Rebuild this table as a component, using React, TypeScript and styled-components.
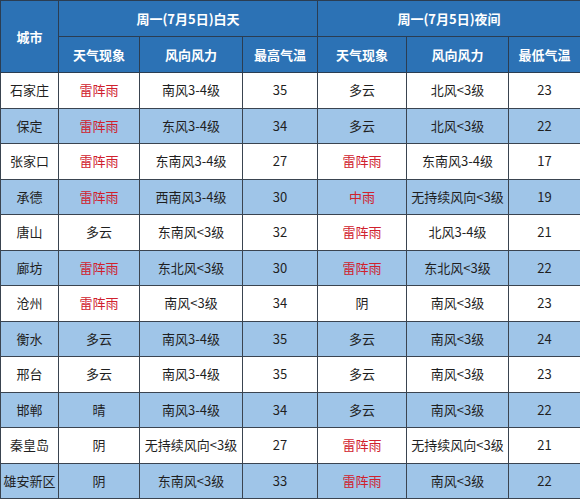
import React from "react";
import styled, { createGlobalStyle } from "styled-components";

const Global = createGlobalStyle`
  html, body { margin: 0; padding: 0; background: #ffffff; }
  body { font-family: "Noto Sans CJK SC", "Noto Sans", sans-serif; }
`;

const Table = styled.table`
  width: 580px;
  border-collapse: collapse;
  table-layout: fixed;
  font-size: 13px;
  line-height: 16px;
  color: #1f1f1f;
`;

const Col = styled.col<{ $w: number }>`
  width: ${(p) => p.$w}px;
`;

const HeadRow = styled.tr`
  height: 36px;
`;

const HeadCell = styled.th`
  background: #2c72b5;
  color: #ffffff;
  font-weight: 700;
  font-size: 13px;
  border: 1px solid #2b3d52;
  text-align: center;
  padding: 0;
`;

const Row = styled.tr<{ $alt: boolean }>`
  height: 35.5px;
  background: ${(p) => (p.$alt ? "#9fc5e8" : "#ffffff")};
`;

const Cell = styled.td<{ $red?: boolean }>`
  border: 1px solid #3a4450;
  text-align: center;
  padding: 0;
  color: ${(p) => (p.$red ? "#d0212d" : "#1f1f1f")};
  white-space: nowrap;
`;

type R = [string, string, string, string, string, string, string];

const rows: R[] = [
  ["石家庄", "雷阵雨", "南风3-4级", "35", "多云", "北风<3级", "23"],
  ["保定", "雷阵雨", "东风3-4级", "34", "多云", "北风<3级", "22"],
  ["张家口", "雷阵雨", "东南风3-4级", "27", "雷阵雨", "东南风3-4级", "17"],
  ["承德", "雷阵雨", "西南风3-4级", "30", "中雨", "无持续风向<3级", "19"],
  ["唐山", "多云", "东南风<3级", "32", "雷阵雨", "北风3-4级", "21"],
  ["廊坊", "雷阵雨", "东北风<3级", "30", "雷阵雨", "东北风<3级", "22"],
  ["沧州", "雷阵雨", "南风<3级", "34", "阴", "南风<3级", "23"],
  ["衡水", "多云", "南风3-4级", "35", "多云", "南风<3级", "24"],
  ["邢台", "多云", "南风3-4级", "35", "多云", "南风<3级", "23"],
  ["邯郸", "晴", "南风3-4级", "34", "多云", "南风<3级", "22"],
  ["秦皇岛", "阴", "无持续风向<3级", "27", "雷阵雨", "无持续风向<3级", "21"],
  ["雄安新区", "阴", "东南风<3级", "33", "雷阵雨", "南风<3级", "22"],
];

const isRed = (s: string) => s === "雷阵雨" || s === "中雨";

const widths = [58, 81, 103, 75, 89, 102, 72];

export default function App() {
  return (
    <>
      <Global />
      <Table>
        <colgroup>
          {widths.map((w, i) => (
            <Col key={i} $w={w} />
          ))}
        </colgroup>
        <thead>
          <HeadRow>
            <HeadCell rowSpan={2}>城市</HeadCell>
            <HeadCell colSpan={3}>周一(7月5日)白天</HeadCell>
            <HeadCell colSpan={3}>周一(7月5日)夜间</HeadCell>
          </HeadRow>
          <HeadRow>
            <HeadCell>天气现象</HeadCell>
            <HeadCell>风向风力</HeadCell>
            <HeadCell>最高气温</HeadCell>
            <HeadCell>天气现象</HeadCell>
            <HeadCell>风向风力</HeadCell>
            <HeadCell>最低气温</HeadCell>
          </HeadRow>
        </thead>
        <tbody>
          {rows.map((r, i) => (
            <Row key={r[0]} $alt={i % 2 === 1}>
              {r.map((c, j) => (
                <Cell key={j} $red={(j === 1 || j === 4) && isRed(c)}>
                  {c}
                </Cell>
              ))}
            </Row>
          ))}
        </tbody>
      </Table>
    </>
  );
}
